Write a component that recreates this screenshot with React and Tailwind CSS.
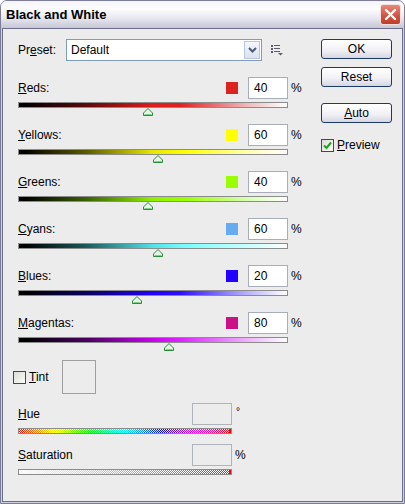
import React from "react";

const rows = [
  {
    key: "R",
    rest: "eds:",
    value: 40,
    swatch: "bg-[#dd2222]",
    bar: "bg-[linear-gradient(to_right,#000_2%,#5a0a0a_25%,#e01c1c_50%,#e02020_60%,#f0b8b8_85%,#fff_100%)]",
  },
  {
    key: "Y",
    rest: "ellows:",
    value: 60,
    swatch: "bg-[#ffff00]",
    bar: "bg-[linear-gradient(to_right,#000_2%,#5a5a00_25%,#e8e800_50%,#ffff00_62%,#ffffb0_85%,#fff_100%)]",
  },
  {
    key: "G",
    rest: "reens:",
    value: 40,
    swatch: "bg-[#99ff00]",
    bar: "bg-[linear-gradient(to_right,#000_2%,#3a6000_25%,#90f000_50%,#99ff00_62%,#d8ffb0_85%,#fff_100%)]",
  },
  {
    key: "C",
    rest: "yans:",
    value: 60,
    swatch: "bg-[#66aaf0]",
    bar: "bg-[linear-gradient(to_right,#000_2%,#1a5a5a_25%,#55e0e8_50%,#77ffff_62%,#c8ffff_85%,#fff_100%)]",
  },
  {
    key: "B",
    rest: "lues:",
    value: 20,
    swatch: "bg-[#2200ff]",
    bar: "bg-[linear-gradient(to_right,#000_2%,#0a0060_25%,#2200ff_50%,#2a10ff_60%,#b8b0ff_85%,#fff_100%)]",
  },
  {
    key: "M",
    rest: "agentas:",
    value: 80,
    swatch: "bg-[#cc1188]",
    bar: "bg-[linear-gradient(to_right,#000_2%,#4a0060_25%,#cc00ee_50%,#dd22ff_60%,#f0b0ff_85%,#fff_100%)]",
  },
];

function Thumb() {
  return (
    <svg width="10" height="8" viewBox="0 0 10 8">
      <path
        d="M5 0.5 L9.5 5 V7.5 H0.5 V5 Z"
        fill="#e6f6e6"
        stroke="#2a8c3a"
        strokeWidth="1"
      />
      <path d="M1.5 6.5 H8.5" stroke="#7ccf86" strokeWidth="1" />
    </svg>
  );
}

function Checkbox({ checked }) {
  return (
    <span className="flex h-[13px] w-[13px] items-center justify-center border border-[#1c5180] bg-[linear-gradient(135deg,#dcdcd6,#fbfbf9)]">
      {checked && (
        <svg width="9" height="9" viewBox="0 0 9 9">
          <path
            d="M1 4.5 L3.5 7 L8 1.5"
            fill="none"
            stroke="#21a121"
            strokeWidth="2"
          />
        </svg>
      )}
    </span>
  );
}

function XpButton({ children }) {
  return (
    <button className="flex h-[20px] w-[71px] items-center justify-center rounded-[3px] border border-[#1c3a66] bg-[linear-gradient(to_bottom,#ffffff,#f2f2f6_55%,#d6d6e2)] text-[12px] text-black">
      {children}
    </button>
  );
}

function ChannelRow({ row }) {
  const frac = (row.value + 200) / 500;
  return (
    <div className="flex flex-col">
      <div className="flex h-[22px] items-center">
        <span className="w-[208px]">
          <u>{row.key}</u>
          {row.rest}
        </span>
        <span className={`h-[12px] w-[12px] ${row.swatch}`} />
        <span className="ml-[10px] flex h-[22px] w-[40px] items-center border border-[#a7aeb8] bg-white pl-[5px]">
          {row.value}
        </span>
        <span className="ml-[3px]">%</span>
      </div>
      <div className={`mt-[3px] h-[6px] w-[270px] border border-[#8c8c8c] ${row.bar}`} />
      <div className="relative h-[16px] w-[270px]">
        <span
          className="absolute top-0 -translate-x-1/2"
          style={{ left: `${frac * 100}%` }}
        >
          <Thumb />
        </span>
      </div>
    </div>
  );
}

export default function App() {
  return (
    <div className="flex h-[504px] w-[405px] flex-col overflow-hidden rounded-t-[7px] border border-[#7c7c98] bg-[#ececec] font-['Liberation_Sans',Arial,sans-serif] text-[12px] text-black">
      {/* Title bar */}
      <div className="flex h-[27px] items-center justify-between bg-[linear-gradient(to_bottom,#f4f4f8,#fdfdff_30%,#e6e6ee_65%,#c6c6d6)] pl-[5px] pr-[3px]">
        <span className="text-[13px] font-bold">Black and White</span>
        <span className="flex h-[21px] w-[21px] items-center justify-center rounded-[3px] border border-[#f4e0dc] bg-[linear-gradient(to_bottom,#e8897a,#d0503e_60%,#c03c2c)]">
          <svg width="13" height="13" viewBox="0 0 13 13">
            <path
              d="M2 2 L11 11 M11 2 L2 11"
              stroke="#fff"
              strokeWidth="2.4"
              strokeLinecap="round"
            />
          </svg>
        </span>
      </div>

      {/* Body */}
      <div className="flex flex-1 flex-col border-x border-b border-[#d0d0dc]">
        <div className="flex flex-1 border border-[#6d6d8c] pl-[15px] pt-[10px]">
          {/* Left column */}
          <div className="flex w-[302px] flex-col">
            <div className="flex h-[22px] items-center">
              <span className="w-[48px]">
                Pr<u>e</u>set:
              </span>
              <div className="flex h-[22px] w-[196px] items-center border border-[#7f9db9] bg-white">
                <span className="flex-1 pl-[4px]">Default</span>
                <span className="mr-[1px] flex h-[18px] w-[16px] items-center justify-center border border-[#b9c6dc] bg-[linear-gradient(to_bottom,#f4f6fb,#dbe2ef)]">
                  <svg width="9" height="6" viewBox="0 0 9 6">
                    <path
                      d="M1 1 L4.5 4.5 L8 1"
                      fill="none"
                      stroke="#4a5a78"
                      strokeWidth="2"
                    />
                  </svg>
                </span>
              </div>
              <span className="ml-[9px]">
                <svg width="12" height="11" viewBox="0 0 12 11">
                  <g fill="#5a5a70">
                    <rect x="0" y="0" width="2" height="2" />
                    <rect x="3" y="0" width="6" height="1" />
                    <rect x="0" y="3" width="2" height="2" />
                    <rect x="3" y="3" width="6" height="1" />
                    <rect x="0" y="6" width="2" height="2" />
                    <rect x="3" y="6" width="6" height="1" />
                    <path d="M7 8 H12 L9.5 10.5 Z" />
                  </g>
                </svg>
              </span>
            </div>

            <div className="mt-[16px] flex flex-col">
              {rows.map((row) => (
                <ChannelRow key={row.key} row={row} />
              ))}
            </div>

            {/* Tint */}
            <div className="-ml-[5px] mt-[1px] flex h-[34px] items-center">
              <Checkbox />
              <span className="ml-[3px] w-[33px]">
                <u>T</u>int
              </span>
              <span className="h-[34px] w-[34px] border border-[#a0a0a0]" />
            </div>

            {/* Hue */}
            <div className="mt-[9px] flex h-[22px] items-center">
              <span className="w-[174px]">
                <u>H</u>ue
              </span>
              <span className="h-[22px] w-[40px] border border-[#b0b4ba]" />
              <span className="-mt-[6px] ml-[4px] text-[10px]">°</span>
            </div>
            <div className="relative mt-[3px] h-[6px] w-[214px] border border-[#8c8c8c] bg-[linear-gradient(to_right,#f00,#ff0_17%,#0f0_33%,#0ff_50%,#00f_67%,#f0f_83%,#f00)]">
              <div className="absolute inset-0 bg-[image:repeating-conic-gradient(#f2f2f2_0_25%,transparent_0_50%)] bg-[length:2px_2px]" />
              <div className="absolute inset-y-0 right-0 w-[2px] bg-[#e01010]" />
            </div>

            {/* Saturation */}
            <div className="mt-[10px] flex h-[22px] items-center">
              <span className="w-[174px]">
                <u>S</u>aturation
              </span>
              <span className="h-[22px] w-[40px] border border-[#b0b4ba]" />
              <span className="ml-[3px]">%</span>
            </div>
            <div className="relative mt-[3px] h-[6px] w-[214px] border border-[#8c8c8c] bg-[linear-gradient(to_right,#fff,#f07070_70%,#e02020)]">
              <div className="absolute inset-0 bg-[image:repeating-conic-gradient(#f8f8f8_0_25%,transparent_0_50%)] bg-[length:2px_2px]" />
              <div className="absolute inset-y-0 right-0 w-[2px] bg-[#e01010]" />
            </div>
          </div>

          {/* Right column */}
          <div className="ml-[1px] flex flex-col">
            <XpButton>OK</XpButton>
            <div className="mt-[8px]">
              <XpButton>Reset</XpButton>
            </div>
            <div className="mt-[16px]">
              <XpButton>
                <span>
                  <u>A</u>uto
                </span>
              </XpButton>
            </div>
            <div className="mt-[13px] flex items-center">
              <Checkbox checked />
              <span className="ml-[3px]">
                <u>P</u>review
              </span>
            </div>
          </div>
        </div>
      </div>
    </div>
  );
}
